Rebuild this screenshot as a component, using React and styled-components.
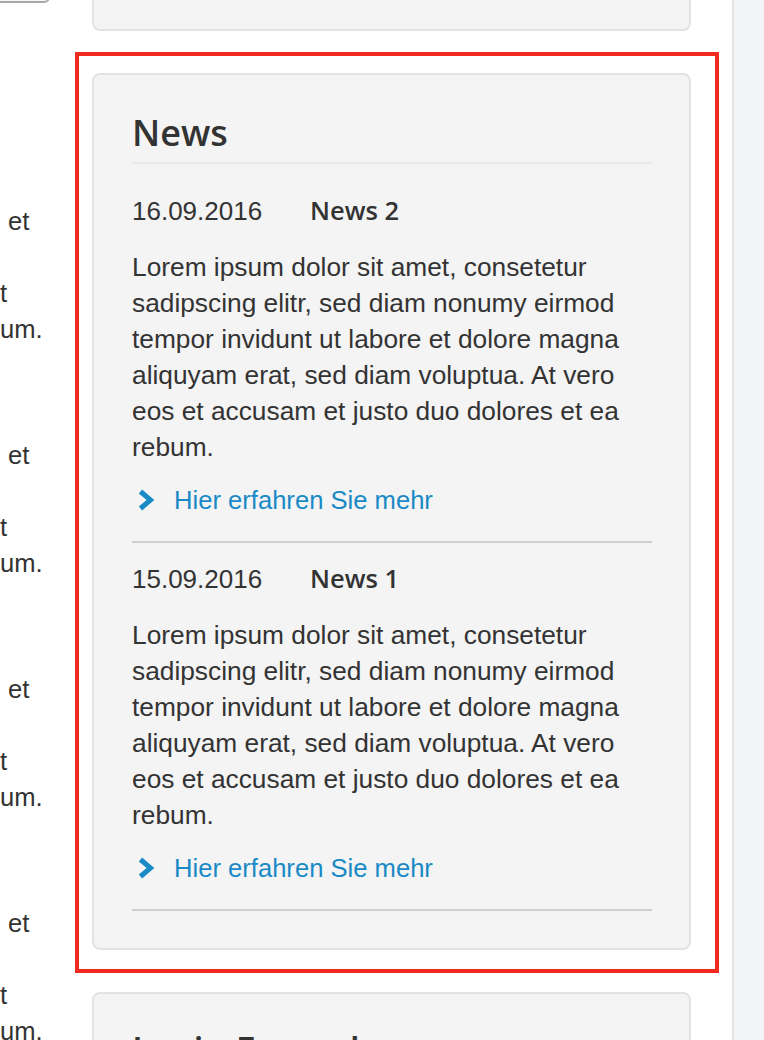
import React from "react";
import styled, { createGlobalStyle } from "styled-components";

const GlobalStyle = createGlobalStyle`
  html, body {
    margin: 0;
    padding: 0;
    background: #fff;
  }
  body {
    font-family: "Liberation Sans", Arial, Helvetica, sans-serif;
    color: #333;
  }
`;

const Page = styled.div`
  position: relative;
  display: flex;
  width: 764px;
  height: 1040px;
  overflow: hidden;
`;

const MainEdge = styled.div`
  flex: none;
  width: 50px;
  overflow: hidden;
`;

const EdgeButton = styled.div`
  box-sizing: border-box;
  width: 56px;
  height: 30px;
  margin: -27px 0 0 -6px;
  border: 2px solid #a8a8a8;
  border-radius: 6px;
  background: #f7f7f7;
`;

const EdgeText = styled.div`
  margin-top: 200px;
`;

const EdgeBlock = styled.div`
  margin-bottom: 90px;
`;

const EdgeLine = styled.div`
  height: 36px;
  line-height: 36px;
  font-size: 25.6px;
  white-space: pre;
  padding-left: ${(p) => p.$indent || 0}px;
`;

const Sidebar = styled.div`
  flex: none;
  width: 599px;
  margin: -30px 0 0 42px;
  display: flex;
  flex-direction: column;
  gap: 42px;
`;

const Card = styled.div`
  flex: none;
  box-sizing: border-box;
  background: #f4f4f4;
  border: 2px solid #e3e3e3;
  border-radius: 8px;
  padding: ${(p) => (p.$stub ? "0" : `${p.$padTop ?? 38}px 37px 37px 38px`)};
  min-height: ${(p) => p.$minHeight || 0}px;
`;

const CardTitle = styled.h2`
  margin: 0 0 11px;
  padding-bottom: 9px;
  border-bottom: 2px solid #e9e9e9;
  font-family: "Open Sans", "Liberation Sans", sans-serif;
  font-weight: 600;
  font-size: 36px;
  line-height: 40px;
  color: #333;
`;

const NewsItem = styled.div`
  padding: 20px 0 23px;
  border-bottom: 2px solid #d0d0d0;
`;

const ItemHead = styled.div`
  display: flex;
  align-items: baseline;
  line-height: 30px;
`;

const ItemDate = styled.span`
  flex: none;
  width: 178px;
  font-size: 26px;
`;

const ItemTitle = styled.span`
  font-family: "Open Sans", "Liberation Sans", sans-serif;
  font-weight: 600;
  font-size: 25.5px;
`;

const ItemText = styled.p`
  margin: 23px 0 0;
  font-size: 26.3px;
  line-height: 36px;
`;

const MoreLink = styled.a`
  display: flex;
  align-items: center;
  height: 36px;
  margin-top: 17px;
  font-size: 25.6px;
  color: #1a8ac6;
  text-decoration: none;

  svg {
    margin: 0 19px 0 5px;
  }
`;

const RightStrip = styled.div`
  flex: 1;
  margin-left: 41px;
  border-left: 2px solid #e4e4e4;
  background: #f3f4f6;
`;

const Highlight = styled.div`
  position: absolute;
  left: 75px;
  top: 52px;
  width: 644px;
  height: 921px;
  box-sizing: border-box;
  border: 4px solid #f22b21;
  pointer-events: none;
`;

const Chevron = () => (
  <svg width="18" height="22" viewBox="0 0 18 22">
    <polyline
      points="3.5,2.5 13.5,11 3.5,19.5"
      fill="none"
      stroke="#1a8ac6"
      strokeWidth="5"
      strokeLinejoin="miter"
    />
  </svg>
);

const lorem =
  "Lorem ipsum dolor sit amet, consetetur sadipscing elitr, sed diam nonumy eirmod tempor invidunt ut labore et dolore magna aliquyam erat, sed diam voluptua. At vero eos et accusam et justo duo dolores et ea rebum.";

const news = [
  { date: "16.09.2016", title: "News 2", text: lorem },
  { date: "15.09.2016", title: "News 1", text: lorem },
];

export default function App() {
  return (
    <>
      <GlobalStyle />
      <Page>
        <MainEdge>
          <EdgeButton />
          <EdgeText>
            {[0, 1, 2, 3].map((i) => (
              <EdgeBlock key={i}>
                <EdgeLine $indent={8}>et</EdgeLine>
                <EdgeLine />
                <EdgeLine>t</EdgeLine>
                <EdgeLine>um.</EdgeLine>
              </EdgeBlock>
            ))}
          </EdgeText>
        </MainEdge>

        <Sidebar>
          <Card $stub $minHeight={61} />
          <Card>
            <CardTitle>News</CardTitle>
            {news.map((item) => (
              <NewsItem key={item.title}>
                <ItemHead>
                  <ItemDate>{item.date}</ItemDate>
                  <ItemTitle>{item.title}</ItemTitle>
                </ItemHead>
                <ItemText>{item.text}</ItemText>
                <MoreLink href="#">
                  <Chevron />
                  Hier erfahren Sie mehr
                </MoreLink>
              </NewsItem>
            ))}
          </Card>
          <Card $padTop={36} $minHeight={200}>
            <CardTitle>Login Formular</CardTitle>
          </Card>
        </Sidebar>

        <RightStrip />
        <Highlight />
      </Page>
    </>
  );
}
